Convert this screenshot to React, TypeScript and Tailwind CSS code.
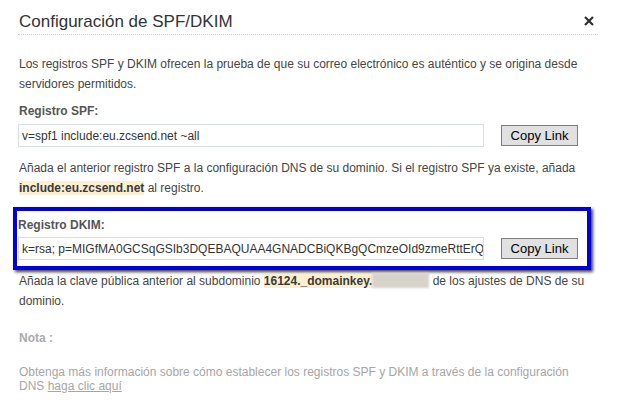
import { useState } from 'react';

const SPF_VALUE = 'v=spf1 include:eu.zcsend.net ~all';
const DKIM_VALUE =
  'k=rsa; p=MIGfMA0GCSqGSIb3DQEBAQUAA4GNADCBiQKBgQCmzeOId9zmeRttErQmN2x7vY0aLkq1bqO8wIDAQAB';

function CopyRow({ value }: { value: string }) {
  const [copied, setCopied] = useState(false);
  return (
    <div className="flex items-center">
      <input
        readOnly
        value={value}
        className="w-[466px] h-[23px] border border-[#d9dee6] bg-white pl-[3px] text-[12px] text-[#333] outline-none"
      />
      <button
        type="button"
        onClick={() => setCopied(true)}
        className="ml-[17px] w-[77px] h-[21px] border border-[#7d7d7d] bg-[#e1e1e1] text-[13px] leading-none text-black"
      >
        {copied ? 'Copied' : 'Copy Link'}
      </button>
    </div>
  );
}

export default function App() {
  return (
    <div className="w-[617px] h-[401px] overflow-hidden bg-white font-['Liberation_Sans',Arial,sans-serif] text-[12px] text-[#454545]">
      {/* Header */}
      <div className="mx-[18px] w-[580px] pt-[11px] pb-px flex items-center justify-between border-b border-dotted border-[#d0d0d0]">
        <h2 className="pl-px text-[17px] leading-[22px] text-[#333]">Configuración de SPF/DKIM</h2>
        <button type="button" className="mr-[4px] mb-[2px]" aria-label="Cerrar">
          <svg width="10" height="10" viewBox="0 0 10 10">
            <path d="M1 1 L9 9 M9 1 L1 9" stroke="#2f2f2f" strokeWidth="2.2" />
          </svg>
        </button>
      </div>

      <div className="pl-[18px] pr-[19px]">
        <p className="mt-[19px] pl-px leading-[20px]">
          Los registros SPF y DKIM ofrecen la prueba de que su correo electrónico es auténtico y se origina desde
          servidores permitidos.
        </p>

        <div className="mt-[7px] pl-px font-bold leading-[20px] text-[#555]">Registro SPF:</div>
        <div className="mt-[3px]">
          <CopyRow value={SPF_VALUE} />
        </div>

        <p className="mt-[11px] pl-px leading-[20px]">
          Añada el anterior registro SPF a la configuración DNS de su dominio. Si el registro SPF ya existe, añada{' '}
          <span className="bg-[#fcefd0] font-bold text-[#3a3a3a]">include:eu.zcsend.net</span> al registro.
        </p>
      </div>

      {/* Highlighted DKIM block */}
      <div className="mt-[9px] ml-[13px] w-[578px] border-[4px] border-[#0000dd] pl-px pt-[4px] pb-[6px] shadow-[2px_2px_3px_rgba(0,0,0,0.75)]">
        <div className="font-bold leading-[20px] text-[#555]">Registro DKIM:</div>
        <div className="mt-[2px]">
          <CopyRow value={DKIM_VALUE} />
        </div>
      </div>

      <div className="pl-[18px] pr-[19px]">
        <p className="mt-px pl-px leading-[20px]">
          Añada la clave pública anterior al subdominio{' '}
          <span className="bg-[#fcefd0] font-bold text-[#3a3a3a]">16124._domainkey.</span>
          <span className="inline-block w-[57px] h-[15px] align-[-3px] bg-[#d8d3ca] blur-[1px]" />{' '}
          de los ajustes de DNS de su dominio.
        </p>

        <div className="mt-[17px] pl-px font-bold leading-[20px] text-[#aaa]">Nota :</div>

        <p className="mt-[17px] w-[572px] pl-px leading-[14px] text-[#a6a6a6]">
          Obtenga más información sobre cómo establecer los registros SPF y DKIM a través de la configuración DNS{' '}
          <a href="#" className="underline">
            haga clic aquí
          </a>
        </p>
      </div>
    </div>
  );
}
